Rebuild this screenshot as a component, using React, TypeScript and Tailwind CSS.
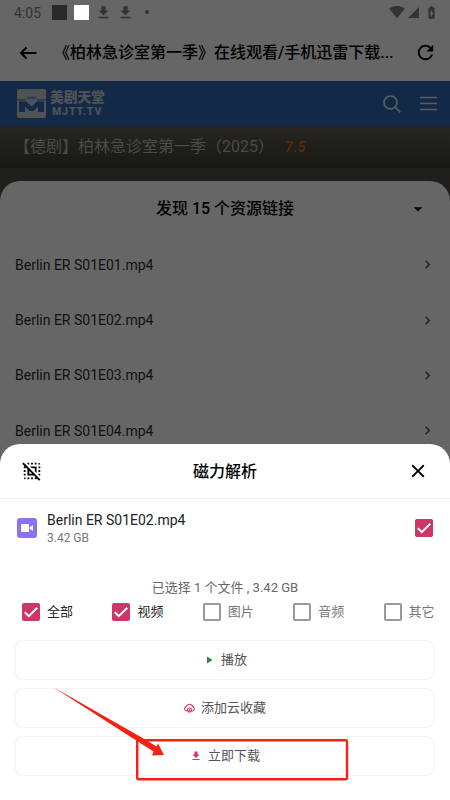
import React from 'react';
import {
  MdArrowDropDown, MdBatteryChargingFull, MdChevronRight, MdClose, MdDeselect, MdDownload,
  MdPlayArrow, MdRefresh, MdSignalCellular4Bar, MdSignalWifi4Bar,
} from 'react-icons/md';


const episodes = [
  'Berlin ER S01E01.mp4',
  'Berlin ER S01E02.mp4',
  'Berlin ER S01E03.mp4',
  'Berlin ER S01E04.mp4',
];

const filters = [
  { label: '全部', checked: true },
  { label: '视频', checked: true },
  { label: '图片', checked: false },
  { label: '音频', checked: false },
  { label: '其它', checked: false },
];

function Checkbox({ checked }: { checked: boolean }) {
  return checked ? (
    <span className="h-[18px] w-[18px] shrink-0 bg-[#cd3667] rounded-[2px]">
      <svg width="18" height="18" viewBox="0 0 18 18" fill="none" stroke="#fff" strokeWidth="2">
        <path d="M2.800 9.200 6.800 13.200 15.300 4.700"/>
      </svg>
    </span>
  ) : (
    <span className="h-[18px] w-[18px] shrink-0 border-2 border-[#999] rounded-[2px]"/>
  );
}

function ArrowIcon() {
  return (
    <svg className="shrink-0" width="18" height="14" viewBox="0 0 18 14" fill="none" stroke="currentColor" strokeWidth="2">
      <path d="M17.500 7H2M7.500 1.500 2 7l5.500 5.500"/>
    </svg>
  );
}

function SearchIcon() {
  return (
    <svg width="18" height="18" viewBox="0 0 18 18" fill="none" stroke="currentColor" strokeWidth="1.700">
      <circle cx="7.500" cy="7.500" r="6.500"/>
      <path d="m12 12 5.300 5.300"/>
    </svg>
  );
}

function MenuIcon() {
  return (
    <svg width="17" height="15" viewBox="0 0 17 15" fill="none" stroke="currentColor" strokeWidth="1.500">
      <path d="M0 1.500h17M0 7.500h17M0 13.500h17"/>
    </svg>
  );
}

function CloudIcon() {
  return (
    <svg width="11" height="10" viewBox="0 0 22 20" fill="none" stroke="#cd3667" strokeWidth="2.200">
      <path d="M6 16H5.500a4.400 4.400 0 0 1-.8-8.700 6.500 6.500 0 0 1 12.500 0 4.400 4.400 0 0 1-.7 8.700H16"/>
      <circle cx="11" cy="14" r="4"/>
      <path d="M11 11.500v5m-1.800-1.800 1.800 1.800 1.800-1.800" strokeWidth="1.500"/>
    </svg>
  );
}

function VideoIcon() {
  return (
    <svg width="12" height="8" viewBox="0 0 12 8" fill="#fff">
      <rect width="8" height="8" rx="1"/>
      <path d="M8.500 3.500 12 1v6L8.500 4.500z"/>
    </svg>
  );
}

function StatusBar() {
  return (
    <div className="h-6 pl-[14px] pr-[11px] flex items-center text-[#333]">
      <span className="w-[38px] pt-[2px] text-[14px] leading-none">4:05</span>
      <span className="h-[15px] w-[15px] bg-[#292929]"/>
      <span className="ml-[7px] h-[15px] w-[15px] bg-white"/>
      <MdDownload size={17} className="ml-[6px]"/>
      <MdDownload size={17} className="ml-[5px]"/>
      <span className="ml-[11px] h-[4px] w-[4px] bg-[#333] rounded-full"/>
      <div className="ml-auto flex items-center">
        <MdSignalWifi4Bar size={16}/>
        <MdSignalCellular4Bar size={13} className="ml-[2px]"/>
        <MdBatteryChargingFull size={15} className="ml-[4px]"/>
      </div>
    </div>
  );
}

function SiteLogo() {
  return (
    <div className="flex items-center gap-[4px] text-[#505254]">
      <svg width="29" height="29" viewBox="0 0 29 29">
        <rect width="29" height="29" rx="2" fill="#505254"/>
        <path d="M0 11h9M20 11h9" stroke="#122a48" strokeWidth="1"/>
        <path d="M9 7.500h11l-2 2.500h-7z" fill="#122a48" opacity=".5"/>
        <path d="M2 12.500h7l5.500 5 5.500-5h7V23h-6v-5.500L16.500 22h-4L8 17.500V23H2z" fill="#122a48"/>
      </svg>
      <div className="flex flex-col">
        <span className="text-[13.700px] leading-[17px] font-black">美剧天堂</span>
        <span className="pl-[2px] text-[10.500px] leading-[12px] font-black tracking-[0.900px]">MJTT.TV</span>
      </div>
    </div>
  );
}

function PageBehind() {
  return (
    <div className="h-full flex flex-col bg-[#666]">
      <StatusBar/>
      <div className="h-[57px] pl-[19px] pr-[13px] flex items-center text-black">
        <ArrowIcon/>
        <h1 className="ml-[17px] flex-1 text-[16px] font-medium whitespace-nowrap">
          《柏林急诊室第一季》在线观看/手机迅雷下载...
        </h1>
        <MdRefresh size={23} className="shrink-0"/>
      </div>
      <div className="h-[45px] pl-[17px] pr-[13px] flex items-center bg-[#122a48] text-[#5a5d60]">
        <SiteLogo/>
        <span className="ml-auto"><SearchIcon/></span>
        <span className="ml-[19px]"><MenuIcon/></span>
      </div>
      <div className="h-[42px] pl-[14px] pt-[9px] flex items-start bg-gradient-to-b from-[#262522] to-[#191913] text-[16px] leading-6">
        <span className="text-[#4b4b49]">【德剧】柏林急诊室第一季（2025）</span>
        <span className="ml-[11px] text-[14px] text-[#5c270b] italic font-bold tracking-[0.500px]">7.5</span>
      </div>
      <div className="h-[40px] bg-[#201f1b]"/>
    </div>
  );
}

function LinksSheet() {
  return (
    <section className="absolute inset-x-0 top-[181px] bottom-0 bg-[#666] rounded-t-[20px] text-black">
      <div className="h-14 px-4 grid grid-cols-[1fr_auto_1fr] items-center">
        <span/>
        <h2 className="text-[16px] font-medium">发现 15 个资源链接</h2>
        <MdArrowDropDown size={20} className="mr-[6px] justify-self-end"/>
      </div>
      <ul>
        {episodes.map(name =>
          <li className="h-[55.400px] pl-[15px] pr-[14px] flex items-center justify-between text-[14px] text-[#111]" key={name}>
            <span className="pt-px">{name}</span>
            <MdChevronRight size={17} className="text-[#222]"/>
          </li>
        )}
      </ul>
    </section>
  );
}

function ActionButton({ icon, label }: { icon: React.ReactNode; label: string }) {
  return (
    <button className="h-10 w-full flex items-center justify-center gap-[6px] border border-[#f3f3f3] rounded-[8px] text-[13px] text-[#555]">
      {icon}
      <span>{label}</span>
    </button>
  );
}

function MagnetSheet() {
  return (
    <section className="absolute inset-x-0 top-[444px] bottom-0 bg-white rounded-t-[20px]">
      <div className="h-[55px] px-[21px] flex items-center justify-between border-b border-[#f2f2f2] text-black">
        <MdDeselect size={22}/>
        <h2 className="pt-[2px] text-[16px] font-medium">磁力解析</h2>
        <MdClose size={22}/>
      </div>

      <div className="h-[57px] pl-[17px] pr-[17px] flex items-center">
        <span className="h-5 w-5 flex items-center justify-center bg-[#8b72ee] rounded-[3px]">
          <VideoIcon/>
        </span>
        <div className="ml-[10px] pt-[2px] flex-1">
          <p className="text-[14px] leading-[19px] text-[#222]">Berlin ER S01E02.mp4</p>
          <p className="text-[12px] leading-[16px] text-[#777]">3.42 GB</p>
        </div>
        <Checkbox checked/>
      </div>

      <p className="mt-[22px] text-center text-[13px] leading-5 text-[#666]">已选择 1 个文件 , 3.42 GB</p>
      <div className="mt-[4px] pl-[22px] flex">
        {filters.map(({ label, checked }) =>
          <label className="w-[90.400px] shrink-0 flex items-center gap-[7px] text-[13px] leading-5" key={label}>
            <Checkbox checked={checked}/>
            <span className={checked ? 'text-[#222]' : 'text-[#777]'}>{label}</span>
          </label>
        )}
      </div>

      <div className="mt-[18px] px-[15px] flex flex-col gap-2">
        <ActionButton icon={<MdPlayArrow size={12} className="text-[#2e8540]"/>} label="播放"/>
        <ActionButton icon={<CloudIcon/>} label="添加云收藏"/>
        <ActionButton icon={<MdDownload size={12} className="text-[#cd3667]"/>} label="立即下载"/>
      </div>
    </section>
  );
}

export default function App() {
  return (
    <main className="relative h-[800px] w-[450px] overflow-hidden font-[Roboto,'Noto_Sans_CJK_SC',sans-serif]">
      <PageBehind/>
      <LinksSheet/>
      <MagnetSheet/>

      {/* hand-drawn marker over the download button */}
      <svg className="absolute left-[50px] top-[684px]" width="300" height="98" viewBox="50 684 300 98">
        <rect x="137.200" y="740.200" width="209.800" height="39" rx="1.500" fill="none" stroke="#f02314" strokeWidth="2.400"/>
        <path d="M53 687 140 736.500 156.500 746.500 158 743.500 164 755 152 755.500 153.500 751.500 137 741z" fill="#f02314"/>
      </svg>
    </main>
  );
}
